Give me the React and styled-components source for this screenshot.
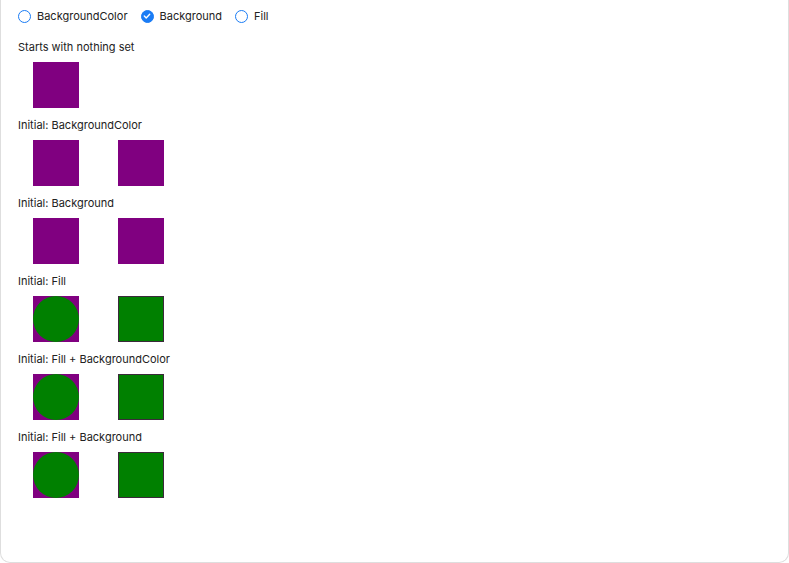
import React from 'react';
import styled, { createGlobalStyle } from 'styled-components';

const GlobalStyle = createGlobalStyle`
  html, body {
    margin: 0;
    padding: 0;
    background: #ffffff;
  }
  body {
    font-family: Inter, "Noto Sans", sans-serif;
    color: #222222;
  }
`;

const Frame = styled.div`
  width: 789px;
  height: 563px;
  box-sizing: border-box;
  border: 1px solid #dedede;
  border-top: none;
  border-radius: 0 0 10px 10px;
  overflow: hidden;
  padding: 8px 0 0 17px;
`;

const RadioGroup = styled.div`
  display: flex;
  align-items: center;
  gap: 13px;
  height: 16px;
`;

const RadioLabel = styled.label`
  display: flex;
  align-items: center;
  gap: 6px;
  font-size: 11px;
  line-height: 16px;
`;

const RadioCircle = styled.span`
  width: 13px;
  height: 13px;
  box-sizing: border-box;
  border-radius: 50%;
  border: 1.5px solid #1a7cf5;
  background: ${(p) => (p.$checked ? '#1a7cf5' : '#fff')};
  display: flex;
  align-items: center;
  justify-content: center;
`;

const Sections = styled.div`
  display: flex;
  flex-direction: column;
  padding-top: 16px;
`;

const Section = styled.div`
  display: flex;
  flex-direction: column;
  margin-bottom: 10px;
`;

const Caption = styled.div`
  font-size: 11px;
  line-height: 14px;
  margin-bottom: 8px;
`;

const Swatches = styled.div`
  display: flex;
  gap: 39px;
  padding-left: 15px;
`;

const Swatch = styled.div`
  width: 46px;
  height: 46px;
  box-sizing: border-box;
  background: ${(p) => (p.$kind === 'square' ? '#008000' : '#800080')};
  border: ${(p) => (p.$kind === 'square' ? '1px solid #3b2a3b' : 'none')};
  display: flex;
`;

const Dot = styled.div`
  width: 46px;
  height: 46px;
  border-radius: 50%;
  background: #008000;
`;

const options = [
  { label: 'BackgroundColor', checked: false },
  { label: 'Background', checked: true },
  { label: 'Fill', checked: false },
];

const sections = [
  { caption: 'Starts with nothing set', swatches: ['plain'] },
  { caption: 'Initial: BackgroundColor', swatches: ['plain', 'plain'] },
  { caption: 'Initial: Background', swatches: ['plain', 'plain'] },
  { caption: 'Initial: Fill', swatches: ['circle', 'square'] },
  { caption: 'Initial: Fill + BackgroundColor', swatches: ['circle', 'square'] },
  { caption: 'Initial: Fill + Background', swatches: ['circle', 'square'] },
];

export default function App() {
  return (
    <>
      <GlobalStyle />
      <Frame>
        <RadioGroup>
          {options.map((o) => (
            <RadioLabel key={o.label}>
              <RadioCircle $checked={o.checked}>
                {o.checked && (
                  <svg width="8" height="8" viewBox="0 0 8 8">
                    <path d="M1.3 4.1 L3.2 5.9 L6.7 2.2" fill="none" stroke="#fff" strokeWidth="1.4" strokeLinecap="round" strokeLinejoin="round" />
                  </svg>
                )}
              </RadioCircle>
              {o.label}
            </RadioLabel>
          ))}
        </RadioGroup>
        <Sections>
          {sections.map((s) => (
            <Section key={s.caption}>
              <Caption>{s.caption}</Caption>
              <Swatches>
                {s.swatches.map((k, i) => (
                  <Swatch key={i} $kind={k}>
                    {k === 'circle' && <Dot />}
                  </Swatch>
                ))}
              </Swatches>
            </Section>
          ))}
        </Sections>
      </Frame>
    </>
  );
}
